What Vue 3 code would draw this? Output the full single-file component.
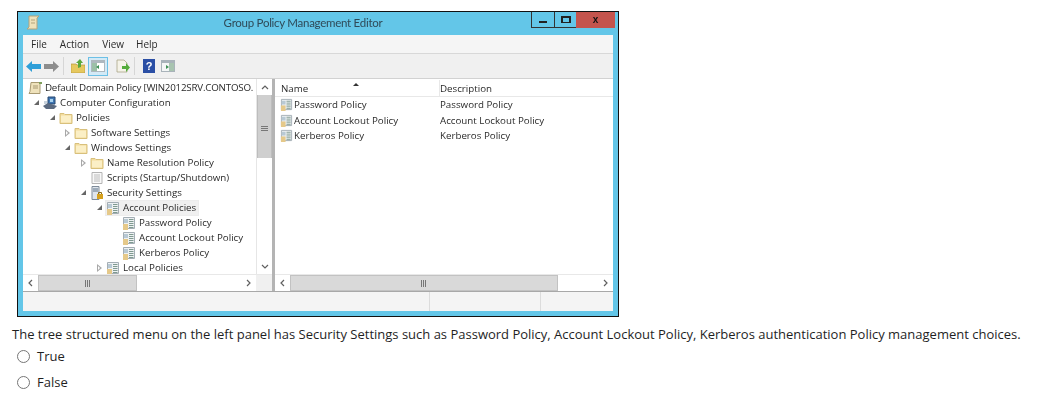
<script setup>
const treeRows = [
  { text: 'Default Domain Policy [WIN2012SRV.CONTOSO.', level: 0, arrow: '', icon: 'scroll' },
  { text: 'Computer Configuration', level: 1, arrow: 'open', icon: 'computer' },
  { text: 'Policies', level: 2, arrow: 'open', icon: 'folder' },
  { text: 'Software Settings', level: 3, arrow: 'closed', icon: 'folder' },
  { text: 'Windows Settings', level: 3, arrow: 'open', icon: 'folder' },
  { text: 'Name Resolution Policy', level: 4, arrow: 'closed', icon: 'folder' },
  { text: 'Scripts (Startup/Shutdown)', level: 4, arrow: '', icon: 'script' },
  { text: 'Security Settings', level: 4, arrow: 'open', icon: 'security' },
  { text: 'Account Policies', level: 5, arrow: 'open', icon: 'policy', selected: true },
  { text: 'Password Policy', level: 6, arrow: '', icon: 'policy' },
  { text: 'Account Lockout Policy', level: 6, arrow: '', icon: 'policy' },
  { text: 'Kerberos Policy', level: 6, arrow: '', icon: 'policy' },
  { text: 'Local Policies', level: 5, arrow: 'closed', icon: 'policy' },
]
const listRows = ['Password Policy', 'Account Lockout Policy', 'Kerberos Policy']
const menus = ['File', 'Action', 'View', 'Help']
const choices = ['True', 'False']
const indent = (level) => ({ paddingLeft: level === 0 ? '0' : `${Math.round((level - 1) * 15.7) + 3}px` })
</script>

<template>
  <div class="page">
    <svg class="defs" width="0" height="0" aria-hidden="true">
      <defs>
        <symbol id="i-folder" viewBox="0 0 14 14">
          <path d="M1 2.5h4l1 1h7v9H1z" fill="#f3dc9c" stroke="#d8c07c" />
          <path d="M2 4.5h10v7H2z" fill="#fbefc6" />
        </symbol>
        <symbol id="i-scroll" viewBox="0 0 14 14">
          <path d="M3 1.5h10l-1 2v9H1l1-2z" fill="#efe2bb" stroke="#a99a72" />
          <path d="M5 5h5M5 7h5" stroke="#a99a72" />
          <path d="M11 1h3v2h-3z" fill="#7fa05c" />
        </symbol>
        <symbol id="i-computer" viewBox="0 0 14 14">
          <path d="M5 1h7v7H5z" fill="#3f77b4" stroke="#27476f" />
          <path d="M0 10l5-3 9 3-3 3H3z" fill="#5b6a80" />
          <path d="M1 5h3v3H1z" fill="#c9d3dc" />
          <path d="M7 3h3v3H7z" fill="#a9d2ee" />
        </symbol>
        <symbol id="i-script" viewBox="0 0 14 14">
          <path d="M2 1.5h10v11H2z" fill="#f8f8f8" stroke="#b4b4b4" />
          <path d="M4 4h6M4 6h6M4 8h6M4 10h6" stroke="#bcbcbc" />
        </symbol>
        <symbol id="i-security" viewBox="0 0 14 14">
          <path d="M2 .5h7v13H2z" fill="#dfe5ec" stroke="#7e8b99" />
          <path d="M3 3h5M3 5h5" stroke="#5d7288" />
          <path d="M7 8h6v5H7z" fill="#d6a11e" />
          <path d="M8.5 8V6.5h3V8" fill="none" stroke="#8a6a14" />
        </symbol>
        <symbol id="i-policy" viewBox="0 0 14 14">
          <path d="M1.5 1.5h11v11h-11z" fill="#eef1f3" stroke="#a4aeb5" />
          <path d="M7 3.5h4.5M7 5.5h4.5M7 7.5h4.5M7 9.5h4.5M7 11.5h4.5" stroke="#7f9a90" />
          <path d="M2 3h4v4H2z" fill="#b8c9d4" />
          <path d="M1 8h5v6H1z" fill="#e5c98a" />
        </symbol>
      </defs>
    </svg>

    <div class="window">
      <header class="titlebar">
        <div class="title-left">
          <svg class="title-icon" viewBox="0 0 14 16"><path d="M3 1h10l-2 2v11H1l2-2z" fill="#efe2bb" stroke="#b3a47c" /><path d="M5 5h4M5 8h4" stroke="#b3a47c" /></svg>
        </div>
        <div class="title">Group Policy Management Editor</div>
        <div class="controls">
          <span class="ctl"><i class="min"></i></span>
          <span class="ctl"><i class="max"></i></span>
          <span class="ctl close">x</span>
        </div>
      </header>

      <nav class="menubar">
        <span v-for="m in menus" :key="m" class="menu">{{ m }}</span>
      </nav>

      <div class="toolbar">
        <svg class="tb back" viewBox="0 0 15 11"><path d="M0 5.5L6 0v3h9v5H6v3z" fill="#2f9fd8" /></svg>
        <svg class="tb fwd" viewBox="0 0 15 11"><path d="M15 5.5L9 0v3H0v5h9v3z" fill="#8d8d8d" /></svg>
        <i class="sep"></i>
        <svg class="tb up" viewBox="0 0 14 14"><path d="M0 5h5l1 1h8v8H0z" fill="#e6c85e" stroke="#b59a3c" stroke-width=".7" /><path d="M7 9V4H5l4-4 3 4h-2v4z" fill="#5aa83c" /></svg>
        <span class="active"><svg class="tb pane" viewBox="0 0 14 12"><path d="M0 0h14v12H0z" fill="#aeb8bf" /><path d="M1 3h12v8H1z" fill="#fff" /><path d="M1 3h5v8H1z" fill="#9cc0a8" /><path d="M5 7l3-2v4z" fill="#3e8f55" /></svg></span>
        <svg class="tb doc" viewBox="0 0 14 14"><path d="M1 1h7l3 3v9H1z" fill="#f5f3e8" stroke="#a9a488" stroke-width=".8" /><path d="M6 7h4V4l4 4.5L10 13v-3H6z" fill="#55ad3a" /></svg>
        <i class="sep"></i>
        <svg class="tb help" viewBox="0 0 12 14"><path d="M0 0h12v14H0z" fill="#2b4fa5" /><text x="6" y="11" text-anchor="middle" font-size="11" font-weight="700" fill="#fff" font-family="Liberation Sans">?</text></svg>
        <svg class="tb pane2" viewBox="0 0 14 12"><path d="M0 0h14v12H0z" fill="#a9b3ba" /><path d="M1 3h12v8H1z" fill="#f4f6f6" /><path d="M8 3h5v8H8z" fill="#a8c4b0" /><path d="M5 5l3 2-3 2z" fill="#3e8f55" /></svg>
      </div>

      <div class="panes">
        <section class="pane-left">
          <div class="tree-wrap">
            <ul class="tree">
              <li v-for="r in treeRows" :key="r.text" class="row" :style="indent(r.level)">
                <span class="arrow" :class="r.arrow"></span>
                <span class="node" :class="{ selected: r.selected }">
                  <svg class="ico"><use :href="`#i-${r.icon}`" /></svg>
                  <span class="label">{{ r.text }}</span>
                </span>
              </li>
            </ul>
            <div class="vscroll">
              <span class="sb-btn up-a"><svg viewBox="0 0 8 5"><path d="M1 4l3-3 3 3" fill="none" stroke="#606060" stroke-width="1.2" /></svg></span>
              <span class="vthumb"><i></i></span>
              <span class="grow"></span>
              <span class="sb-btn"><svg viewBox="0 0 8 5"><path d="M1 1l3 3 3-3" fill="none" stroke="#606060" stroke-width="1.2" /></svg></span>
            </div>
          </div>
          <div class="hscroll">
            <span class="hb"><svg viewBox="0 0 5 8"><path d="M4 1L1 4l3 3" fill="none" stroke="#606060" stroke-width="1.2" /></svg></span>
            <span class="hthumb left-thumb"><i></i></span>
            <span class="grow"></span>
            <span class="hb"><svg viewBox="0 0 5 8"><path d="M1 1l3 3-3 3" fill="none" stroke="#606060" stroke-width="1.2" /></svg></span>
            <span class="corner"></span>
          </div>
        </section>

        <section class="pane-right">
          <div class="list">
            <div class="list-head">
              <span class="col-name">Name<b class="sort"></b></span>
              <span class="col-desc">Description</span>
            </div>
            <div v-for="r in listRows" :key="r" class="list-row">
              <span class="col-name"><svg class="ico"><use href="#i-policy" /></svg><span class="label">{{ r }}</span></span>
              <span class="col-desc">{{ r }}</span>
            </div>
          </div>
          <div class="hscroll">
            <span class="hb"><svg viewBox="0 0 5 8"><path d="M4 1L1 4l3 3" fill="none" stroke="#606060" stroke-width="1.2" /></svg></span>
            <span class="hthumb right-thumb"><i></i></span>
            <span class="grow"></span>
            <span class="hb"><svg viewBox="0 0 5 8"><path d="M1 1l3 3-3 3" fill="none" stroke="#606060" stroke-width="1.2" /></svg></span>
          </div>
        </section>
      </div>

      <footer class="status">
        <span class="s1"></span><span class="s2"></span><span class="s3"></span>
      </footer>
    </div>

    <p class="question">The tree structured menu on the left panel has Security Settings such as Password Policy, Account Lockout Policy, Kerberos authentication Policy management choices.</p>
    <label v-for="c in choices" :key="c" class="choice">
      <span class="radio"></span>{{ c }}
    </label>
  </div>
</template>

<style>
html, body { margin: 0; background: #fff; }
</style>

<style scoped>
.page { width: 1042px; height: 410px; overflow: hidden; padding: 11px 0 0 0; box-sizing: border-box; font-family: "Open Sans", sans-serif; background: #fff; }
.defs { position: absolute; }

.window { margin-left: 17px; width: 602px; height: 306px; box-sizing: border-box; border: 1px solid #111; background: #63c6e8; padding: 0 5px 5px 5px; display: flex; flex-direction: column; color: #2a2a2a; font-size: 10px; filter: blur(0.45px); }

.titlebar { height: 23px; flex: none; display: flex; margin: 0 -5px; }
.title-left { width: 57px; flex: none; padding: 3px 0 0 8px; box-sizing: border-box; }
.title-icon { width: 14px; height: 16px; display: block; }
.title { flex: 1; text-align: center; font: 11.5px/21px Lato, sans-serif; letter-spacing: -0.27px; color: #2f4a58; }
.controls { display: flex; align-items: flex-start; margin-right: 3px; height: 16px; }
.ctl { width: 22px; height: 15px; border: 1px solid #333; border-top: 0; border-right: 0; display: flex; align-items: center; justify-content: center; }
.ctl:nth-child(2) { width: 21px; }
.close { width: 39px; background: #c4544d; border: 0; height: 16px; font: 700 10px/14px "Liberation Sans", sans-serif; color: #111; }
.min { width: 8px; height: 2px; background: #222; margin-top: 5px; }
.max { width: 6px; height: 4px; border: 2px solid #222; border-bottom-width: 1px; }

.menubar { height: 18px; flex: none; background: #f5f5f5; border-bottom: 1px solid #d8d8d8; display: flex; align-items: center; padding-left: 8px; }
.menu { margin-right: 13px; }
.menu:nth-child(3) { margin-right: 12px; }

.toolbar { height: 24px; flex: none; background: #f0f0f0; display: flex; align-items: center; padding-left: 3px; }
.tb { display: block; flex: none; }
.back, .fwd { width: 15px; height: 11px; }
.back { margin-right: 3px; }
.sep { width: 1px; height: 18px; background: #d6d6d6; margin: 0 7px 0 4px; }
.up { width: 14px; height: 14px; margin-right: 3px; }
.active { width: 18px; height: 17px; border: 1px solid #6cc0e6; background: #d4eaf6; display: flex; align-items: center; justify-content: center; margin-right: 8px; }
.pane, .pane2 { width: 14px; height: 12px; }
.doc { width: 14px; height: 14px; }
.help { width: 12px; height: 14px; margin: 0 6px 0 1px; }

.panes { flex: 1; min-height: 0; display: flex; gap: 3px; background: #b4b4b4; border-top: 1px solid #d2d2d2; border-bottom: 1px solid #a8a8a8; font-size: 9.75px; }
.pane-left { width: 249px; flex: none; background: #fff; display: flex; flex-direction: column; }
.pane-right { flex: 1; min-width: 0; background: #fff; display: flex; flex-direction: column; }

.tree-wrap { flex: 1; min-height: 0; display: flex; }
.tree { flex: 1; min-width: 0; margin: 0; padding: 0; list-style: none; }
.row { height: 15px; display: flex; align-items: center; white-space: nowrap; box-sizing: border-box; margin-left: 5px; }
.row:first-child { height: 16px; padding-top: 1px; }
.arrow { width: 12px; height: 8px; flex: none; position: relative; }
.row:first-child .arrow { width: 0; }
.arrow.open::before { content: ""; position: absolute; left: 3px; top: 1px; border-style: solid; border-width: 0 0 5px 5px; border-color: transparent transparent #666 transparent; }
.arrow.closed::before { content: ""; position: absolute; left: 3px; top: 0; border-style: solid; border-width: 4px 0 4px 5px; border-color: transparent transparent transparent #a8a8a8; }
.arrow.closed::after { content: ""; position: absolute; left: 4px; top: 2px; border-style: solid; border-width: 2px 0 2px 2.5px; border-color: transparent transparent transparent #fff; }
.node { display: flex; align-items: center; height: 14px; padding-right: 2px; }
.node.selected { background: #f0f0f0; box-shadow: 0 0 0 1px #ececec; }
.ico { width: 14px; height: 14px; flex: none; }
.label { margin-left: 3px; }
.row:first-child .label { letter-spacing: -0.2px; }

.vscroll { width: 15px; flex: none; border-left: 1px solid #e6e6e6; display: flex; flex-direction: column; background: #fff; }
.sb-btn { height: 16px; flex: none; display: flex; align-items: center; justify-content: center; background: #fff; }
.sb-btn svg { width: 8px; height: 5px; }
.vthumb { height: 63px; flex: none; background: #cfcfcf; border-left: 1px solid #bdbdbd; border-right: 1px solid #bdbdbd; display: flex; align-items: flex-end; justify-content: center; padding-bottom: 26px; box-sizing: border-box; }
.vthumb i { width: 7px; height: 6px; background: repeating-linear-gradient(#777 0 1px, transparent 1px 2px); }
.grow { flex: 1; }

.hscroll { height: 16px; flex: none; display: flex; align-items: stretch; background: #fff; border-top: 1px solid #e8e8e8; }
.hb { width: 15px; flex: none; display: flex; align-items: center; justify-content: center; }
.hb svg { width: 5px; height: 8px; }
.hthumb { flex: none; background: #d9d9d9; border: 1px solid #c2c2c2; box-sizing: border-box; display: flex; align-items: center; justify-content: center; }
.hthumb i { width: 6px; height: 7px; background: repeating-linear-gradient(90deg, #777 0 1px, transparent 1px 2px); }
.left-thumb { width: 99px; }
.right-thumb { width: 268px; }
.corner { width: 16px; flex: none; background: #f0f0f0; }

.list { flex: 1; min-height: 0; }
.list-head { height: 16px; padding-top: 1px; display: flex; align-items: center; border-bottom: 1px solid #e8e8e8; padding-left: 5px; }
.list-row { height: 15.5px; display: flex; align-items: center; padding-left: 5px; }
.col-name { width: 159px; flex: none; display: flex; align-items: center; position: relative; height: 100%; }
.list-row .col-name .ico { width: 13px; height: 13px; }
.list-row .label { margin-left: 1px; }
.col-desc { flex: 1; padding-left: 1px; height: 100%; display: flex; align-items: center; }
.list-head .col-desc { border-left: 1px solid #e8e8e8; padding-left: 0; margin-left: -1px; }
.list-head .col-name { padding-left: 1px; }
.sort { position: absolute; left: 73px; top: 3px; border-style: solid; border-width: 0 3px 3px 3px; border-color: transparent transparent #333 transparent; }

.status { height: 19px; flex: none; background: #f4f4f4; display: flex; }
.status span { display: block; border-right: 1px solid #dcdcdc; }
.s1 { width: 406px; }
.s2 { width: 110px; }
.s3 { flex: 1; border-right: 0 !important; }

.question { margin: 8px 0 0 12px; font-size: 13px; line-height: 18px; color: #1f1f1f; white-space: nowrap; }
.choice { display: flex; align-items: center; height: 26px; padding-left: 17px; font-size: 13px; color: #1f1f1f; }
.radio { width: 11px; height: 11px; border: 1px solid #767676; border-radius: 50%; margin-right: 7px; background: #fff; flex: none; }
</style>
